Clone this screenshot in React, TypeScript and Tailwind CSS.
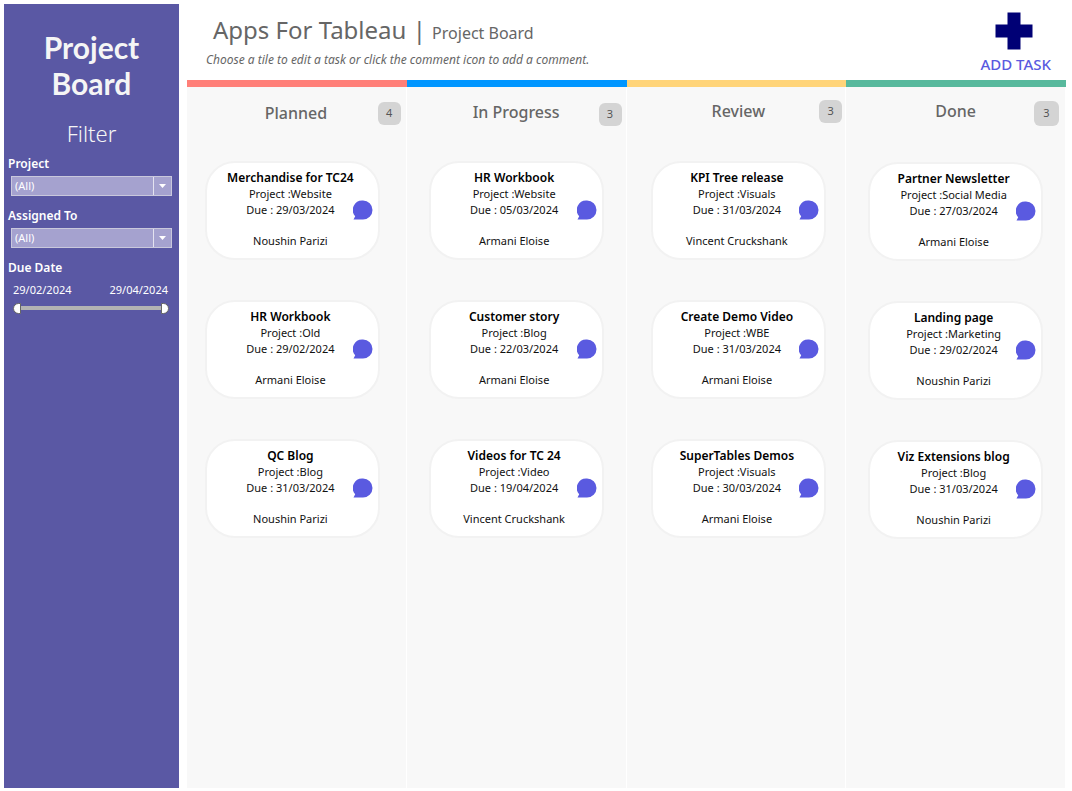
import { useState } from "react";

type Task = { title: string; project: string; due: string; owner: string };

type Column = {
  name: string;
  count: number;
  bar: string;
  head: string;
  title: string;
  badge: string;
  list: string;
  tasks: Task[];
};

const columns: Column[] = [
  {
    name: "Planned",
    count: 4,
    bar: "bg-[#ff7f78]",
    head: "pt-[15px] pr-[5px] pl-1",
    title: "pb-[2px]",
    badge: "size-[23px]",
    list: "pr-2 pt-[36px]",
    tasks: [
      { title: "Merchandise for TC24", project: "Website", due: "29/03/2024", owner: "Noushin Parizi" },
      { title: "HR Workbook", project: "Old", due: "29/02/2024", owner: "Armani Eloise" },
      { title: "QC Blog", project: "Blog", due: "31/03/2024", owner: "Noushin Parizi" },
    ],
  },
  {
    name: "In Progress",
    count: 3,
    bar: "bg-[#0096ff]",
    head: "pt-[15px] pr-1 pl-1",
    title: "pb-[5px]",
    badge: "size-[23px]",
    list: "pt-[34px]",
    tasks: [
      { title: "HR Workbook", project: "Website", due: "05/03/2024", owner: "Armani Eloise" },
      { title: "Customer story", project: "Blog", due: "22/03/2024", owner: "Armani Eloise" },
      { title: "Videos for TC 24", project: "Video", due: "19/04/2024", owner: "Vincent Cruckshank" },
    ],
  },
  {
    name: "Review",
    count: 3,
    bar: "bg-[#ffd479]",
    head: "pt-[13px] pr-[3px] pl-2",
    title: "pb-[2px]",
    badge: "size-[23px]",
    list: "pl-[6px] pt-[38px]",
    tasks: [
      { title: "KPI Tree release", project: "Visuals", due: "31/03/2024", owner: "Vincent Cruckshank" },
      { title: "Create Demo Video", project: "WBE", due: "31/03/2024", owner: "Armani Eloise" },
      { title: "SuperTables Demos", project: "Visuals", due: "30/03/2024", owner: "Armani Eloise" },
    ],
  },
  {
    name: "Done",
    count: 3,
    bar: "bg-[#58b99d]",
    head: "pt-[14px] pr-[6px] pl-[6px]",
    title: "pb-[5px]",
    badge: "size-[25px]",
    list: "pt-[36px]",
    tasks: [
      { title: "Partner Newsletter", project: "Social Media", due: "27/03/2024", owner: "Armani Eloise" },
      { title: "Landing page", project: "Marketing", due: "29/02/2024", owner: "Noushin Parizi" },
      { title: "Viz Extensions blog", project: "Blog", due: "31/03/2024", owner: "Noushin Parizi" },
    ],
  },
];

function Filter({ id, label }: { id: string; label: string }) {
  return (
    <div className="mb-[10px] flex flex-col">
      <label htmlFor={id} className="pl-1 text-xs leading-5 font-semibold">
        {label}
      </label>
      <div className="relative mx-[7px] mt-[2px] h-5 border border-[#c9c8dc] bg-[#a5a2cf]">
        <select id={id} className="block h-full w-full appearance-none bg-transparent pl-[3px] text-[11px] leading-4 text-white">
          <option>(All)</option>
        </select>
        <span className="pointer-events-none absolute inset-y-0 right-0 flex w-[18px] items-center justify-center border-l border-[#e4e3f0]">
          <svg width="7" height="4" viewBox="0 0 7 4" aria-hidden="true">
            <path d="M0 0h7L3.5 4z" fill="#fff" />
          </svg>
        </span>
      </div>
    </div>
  );
}

const rangeBase =
  "pointer-events-none absolute inset-0 h-full w-full appearance-none bg-transparent [&::-webkit-slider-thumb]:pointer-events-auto [&::-webkit-slider-thumb]:h-[11px] [&::-webkit-slider-thumb]:w-2 [&::-webkit-slider-thumb]:appearance-none [&::-webkit-slider-thumb]:border [&::-webkit-slider-thumb]:border-[#666666] [&::-webkit-slider-thumb]:bg-white";

function DateRange() {
  const [from, setFrom] = useState(0);
  const [to, setTo] = useState(60);
  return (
    <fieldset className="flex flex-col">
      <legend className="pl-1 text-xs leading-5 font-semibold">Due Date</legend>
      <div className="flex justify-between pt-1 pr-[11px] pl-[9px] text-[11px] leading-4">
        <span>29/02/2024</span>
        <span>29/04/2024</span>
      </div>
      <div className="relative mt-1 mr-[10px] ml-[9px] flex h-3 items-center">
        <span className="mx-1 h-1 flex-1 bg-[#b3b3b3]" />
        <input
          type="range"
          aria-label="Due date from"
          min={0}
          max={60}
          value={from}
          onChange={(e) => setFrom(Math.min(Number(e.target.value), to))}
          className={rangeBase + " [&::-webkit-slider-thumb]:rounded-l-full"}
        />
        <input
          type="range"
          aria-label="Due date to"
          min={0}
          max={60}
          value={to}
          onChange={(e) => setTo(Math.max(Number(e.target.value), from))}
          className={rangeBase + " [&::-webkit-slider-thumb]:rounded-r-full"}
        />
      </div>
    </fieldset>
  );
}

function TaskCard({ task }: { task: Task }) {
  return (
    <li className="relative h-[99px] w-[175px] rounded-[30px] border-2 border-[#f2f2f2] bg-white text-center text-[11px] text-[#111111]">
      <button type="button" className="h-full w-full cursor-pointer pr-1 pb-1">
        <span className="block text-xs leading-4 font-semibold text-black">{task.title}</span>
        <span className="block leading-4">Project :{task.project}</span>
        <span className="block leading-[15px]">Due : {task.due}</span>
        <span className="block pt-4 leading-[15px]">{task.owner}</span>
      </button>
      <button type="button" aria-label={`Comment on ${task.title}`} className="absolute top-[37px] right-[5px] cursor-pointer">
        <svg width="20" height="20" viewBox="0 0 20 20" aria-hidden="true">
          <path d="M10 .5a9.500 9.500 0 1 1 0 19H.5l1.700-3.200A9.500 9.500 0 0 1 10 .5z" fill="#5a5ae0" />
        </svg>
      </button>
    </li>
  );
}

function BoardColumn({ column }: { column: Column }) {
  return (
    <section className="flex min-w-0 flex-1 flex-col">
      <div className={"h-[7px] " + column.bar} />
      <div className="flex-1 border-r border-white bg-[#f8f8f8]">
        <header className={"grid grid-cols-[1fr_auto_1fr] items-center " + column.head}>
          <h2 className={"col-start-2 text-base leading-5 font-medium text-[#666666] " + column.title}>{column.name}</h2>
          <span className={"flex items-center justify-center justify-self-end rounded-md bg-[#d4d4d4] text-[11px] text-[#555555] " + column.badge}>
            {column.count}
          </span>
        </header>
        <ul className={"flex flex-col items-center gap-10 " + column.list}>
          {column.tasks.map((task) => (
            <TaskCard key={task.title} task={task} />
          ))}
        </ul>
      </div>
    </section>
  );
}

export default function App() {
  return (
    <div className="flex min-h-screen bg-white pt-1 pr-[6px] pb-[3px] pl-1 font-['Noto_Sans',sans-serif]">
      <aside className="mr-2 w-[175px] shrink-0 bg-[#5a58a4] text-white">
        <h1 className="pt-[25px] text-center font-['Chalkduster','Lato',sans-serif] text-[30px] leading-9 font-bold text-[#f5f5f5]">
          Project
          <br />
          Board
        </h1>
        <h2 className="pt-[18px] pb-[7px] text-center text-[22px] leading-7 font-light text-[#f5f5f5]">Filter</h2>
        <Filter id="project" label="Project" />
        <Filter id="assigned" label="Assigned To" />
        <DateRange />
      </aside>
      <main className="flex min-w-0 flex-1 flex-col">
        <header className="flex h-[76px] items-start justify-between text-[#666666]">
          <div>
            <p className="pt-2 pl-[26px] text-2xl leading-9">
              Apps For Tableau | <span className="text-base">Project Board</span>
            </p>
            <p className="pt-1 pl-[19px] text-xs leading-4 italic">
              Choose a tile to edit a task or click the comment icon to add a comment.
            </p>
          </div>
          <button type="button" className="mr-[15px] flex cursor-pointer flex-col items-center pt-2 text-[15px] leading-5 text-[#5a5ae0]">
            <svg className="mr-1" width="38" height="38" viewBox="0 0 38 38" aria-hidden="true">
              <path d="M12.500.5h13v12h12v13h-12v12h-13v-12H.5v-13h12z" fill="#000075" />
            </svg>
            <span className="pt-1 font-medium">ADD TASK</span>
          </button>
        </header>
        <div className="flex flex-1">
          {columns.map((column) => (
            <BoardColumn key={column.name} column={column} />
          ))}
        </div>
      </main>
    </div>
  );
}
